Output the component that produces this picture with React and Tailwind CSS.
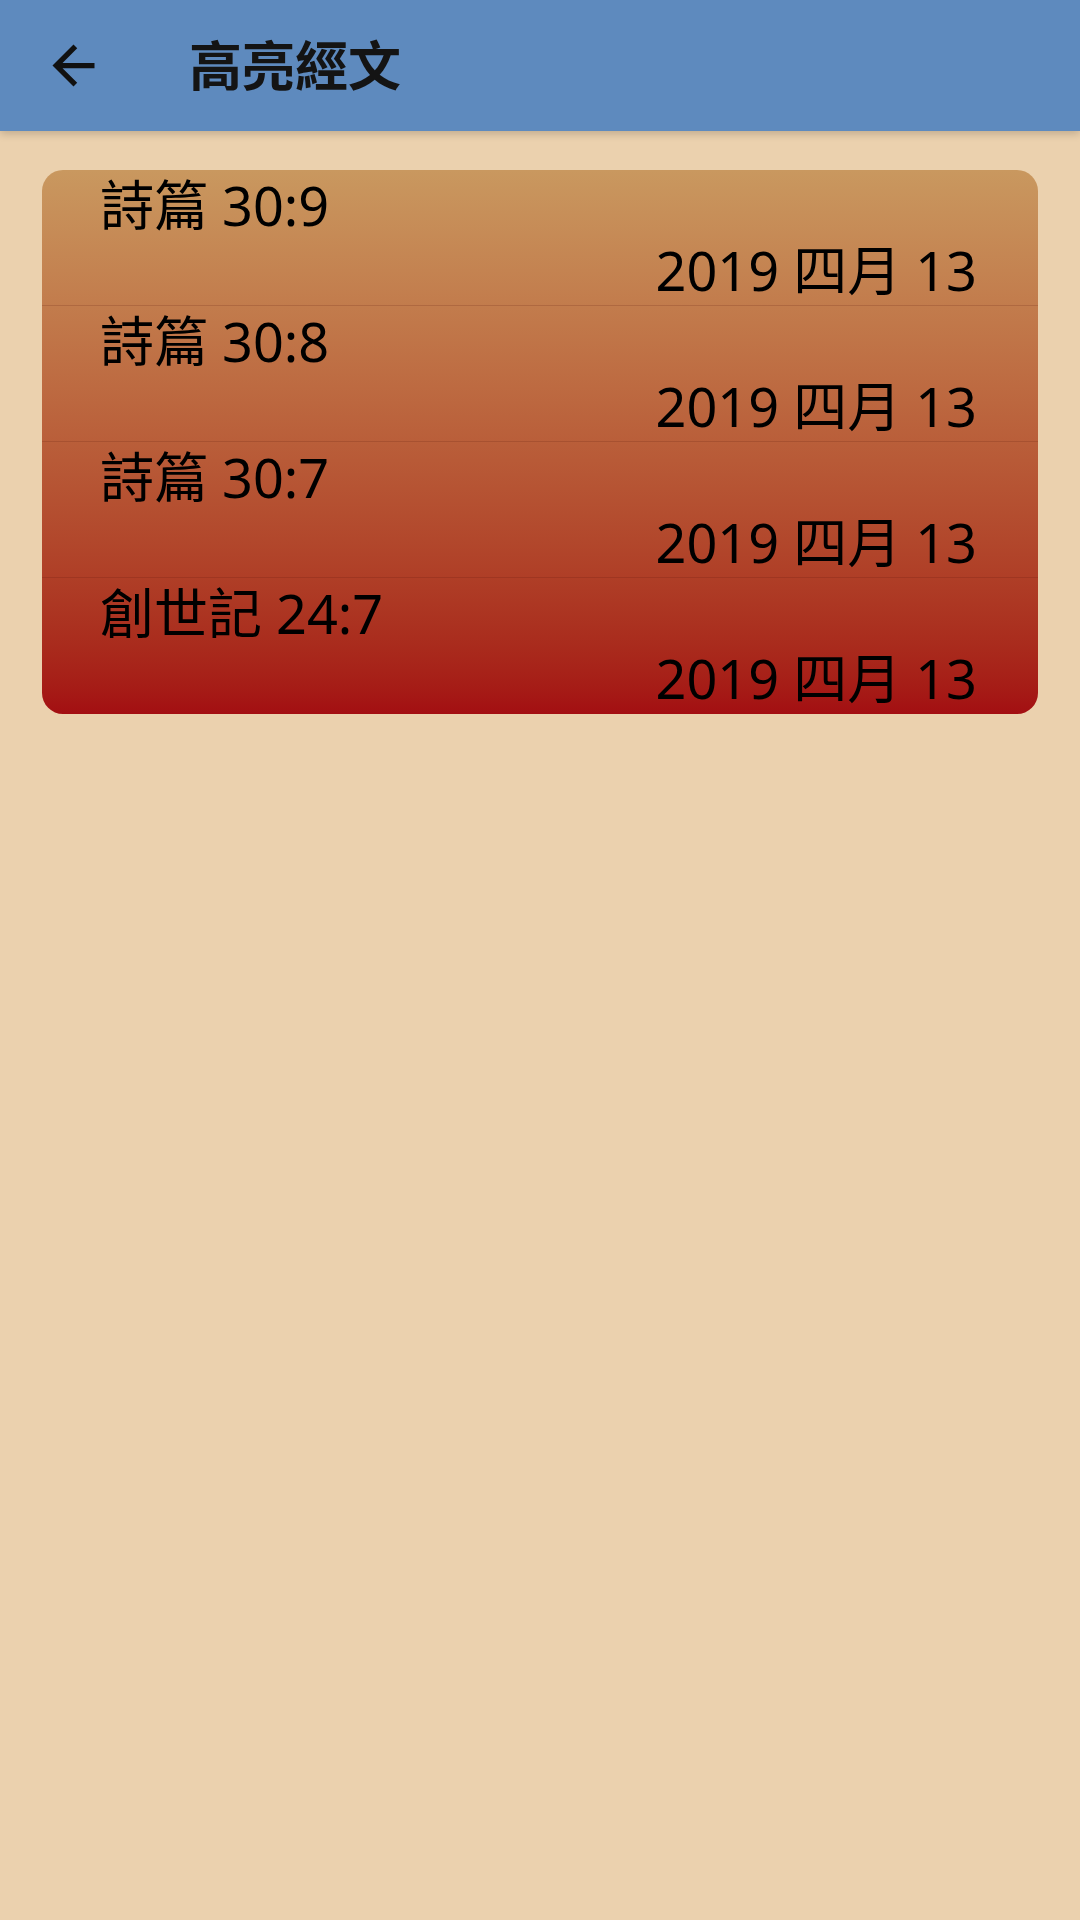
import React from 'react';

const ITEMS = [
  { ref: '詩篇 30:9', date: '2019 四月 13' },
  { ref: '詩篇 30:8', date: '2019 四月 13' },
  { ref: '詩篇 30:7', date: '2019 四月 13' },
  { ref: '創世記 24:7', date: '2019 四月 13' },
];

const FONT = { fontFamily: '"Noto Sans", "Noto Sans CJK TC", sans-serif' };

export default function App() {
  return (
    <div className="w-[1080px] h-[1920px] bg-[#ebd1ae] flex flex-col" style={FONT}>
      {/* Toolbar */}
      <div className="relative z-10 h-[131px] bg-[#5e8abe] flex items-center shadow-[0_3px_8px_rgba(0,0,0,0.18)]">
        <button className="w-[147px] h-full flex items-center justify-center">
          <svg viewBox="0 0 24 24" className="w-[63px] h-[63px]" fill="#111">
            <path d="M20 11H7.83l5.59-5.59L12 4l-8 8 8 8 1.41-1.41L7.83 13H20v-2z" />
          </svg>
        </button>
        <h1 className="ml-[42px] text-[53px] font-bold text-[#141414] leading-none">高亮經文</h1>
      </div>

      {/* Highlighted verse list */}
      <div className="px-[42px] pt-[39px]">
        <div className="rounded-[21px] bg-gradient-to-b from-[#c9985f] to-[#a30e12]">
          {ITEMS.map((item, i) => (
            <div
              key={i}
              className={`h-[136px] pl-[58px] pr-[61px] pt-[3px] text-[54px] leading-[65px] text-black ${
                i < ITEMS.length - 1 ? 'border-b border-[rgba(90,20,10,0.18)]' : ''
              }`}
            >
              <p>{item.ref}</p>
              <p className="text-right">{item.date}</p>
            </div>
          ))}
        </div>
      </div>
    </div>
  );
}
